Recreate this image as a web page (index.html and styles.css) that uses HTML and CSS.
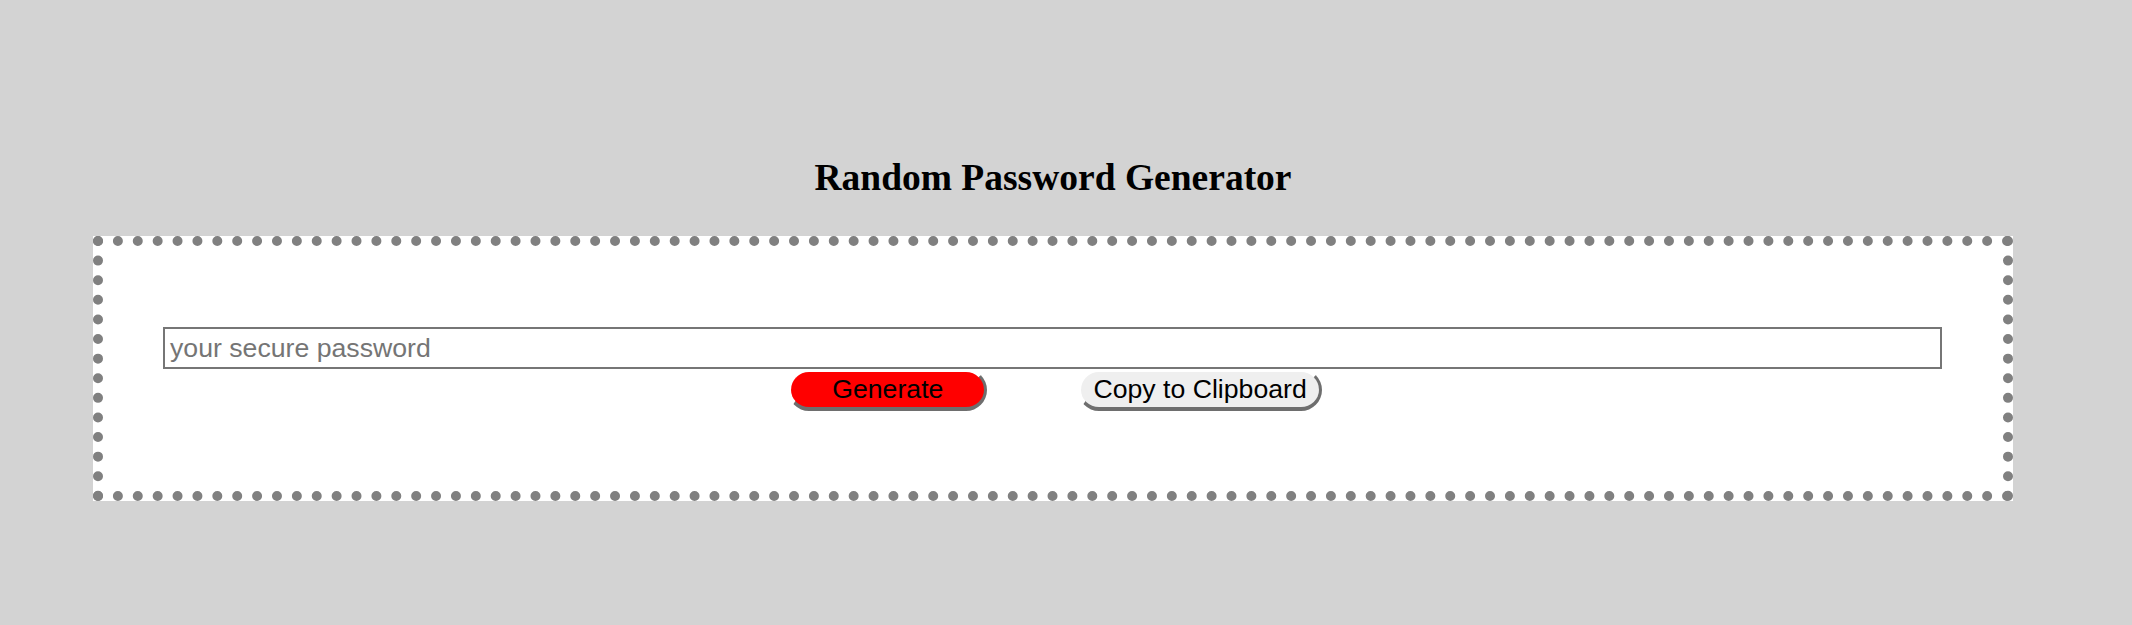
FILE: index.html
```html
<!DOCTYPE html>
<html lang="en">
<head>
<meta charset="utf-8">
<title>Random Password Generator</title>
<link rel="stylesheet" href="styles.css">
</head>
<body>
  <div class="wrapper">
    <header class="header">
      <h1 class="title">Random Password Generator</h1>
    </header>
    <div class="card">
      <div class="card-body">
        <textarea class="password" readonly placeholder="your secure password" aria-label="Generated Password"></textarea>
        <div class="actions">
          <button class="btn btn-generate" type="button">Generate</button>
          <button class="btn btn-copy" type="button">Copy to Clipboard</button>
        </div>
      </div>
    </div>
  </div>
</body>
</html>
```

FILE: styles.css
```css
html, body {
  margin: 0;
  padding: 0;
}

body {
  background: #d3d3d3;
  font-family: "Liberation Serif", "Times New Roman", serif;
  min-height: 625px;
}

.wrapper {
  padding-top: 157px;
  margin-left: 93px;
  width: 1920px;
}

.header {
  display: flex;
  justify-content: center;
}

.title {
  margin: 0;
  font-family: "Liberation Serif", "Times New Roman", serif;
  font-weight: bold;
  font-size: 37.5px;
  line-height: 41px;
  color: #000;
}

.card {
  margin-top: 38px;
  box-sizing: border-box;
  width: 1920px;
  height: 265px;
  background: #fff;
  border: 10px dotted #808080;
}

.card-body {
  padding: 81px 60px 0 60px;
  display: flex;
  flex-direction: column;
}

.password {
  box-sizing: border-box;
  width: 1779px;
  height: 42px;
  margin: 0;
  padding: 3px 5px;
  border: 2px solid #767676;
  background: #fff;
  font-family: "Liberation Sans", Arial, sans-serif;
  font-size: 26.67px;
  line-height: 32px;
  color: #000;
  resize: none;
  overflow: hidden;
  outline: none;
}

.password::placeholder {
  color: #757575;
}

.actions {
  display: flex;
  justify-content: center;
  gap: 91px;
  margin-top: 0;
  padding-left: 4px;
}

.btn {
  font-family: "Liberation Sans", Arial, sans-serif;
  font-size: 26.67px;
  line-height: 29px;
  color: #000;
  margin: 0;
  border-style: solid;
  border-width: 3px 3px 4px 3px;
  border-color: #ffffff #6e6e6e #6e6e6e #ffffff;
  border-radius: 22px;
  cursor: pointer;
}

.btn-generate {
  background: #ff0000;
  padding: 3px 41px;
}

.btn-copy {
  background: #efefef;
  padding: 3px 12px;
}
```
